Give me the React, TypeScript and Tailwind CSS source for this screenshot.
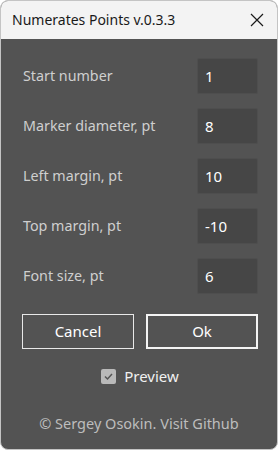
import React from "react";

const rows: [string, string][] = [
  ["Start number", "1"],
  ["Marker diameter, pt", "8"],
  ["Left margin, pt", "10"],
  ["Top margin, pt", "-10"],
  ["Font size, pt", "6"],
];

export default function App() {
  return (
    <div
      className="w-[278px] h-[450px] flex flex-col border border-[#c4c4c4] rounded-[8px] overflow-hidden bg-[#535353]"
      style={{ fontFamily: '"Noto Sans", "Open Sans", sans-serif' }}
    >
      <div className="h-[38px] shrink-0 bg-[#f3f3f3] flex items-center justify-between pl-[11px] pr-[13px]">
        <span className="text-[14px] text-[#1a1a1a] leading-none">Numerates Points v.0.3.3</span>
        <svg width="14" height="14" viewBox="0 0 14 14">
          <path d="M1 1 L13 13 M13 1 L1 13" stroke="#1a1a1a" strokeWidth="1.2" />
        </svg>
      </div>
      <div className="flex flex-col pt-[19px] pl-[21px] pr-[19px]">
        <div className="flex flex-col gap-[14px]">
          {rows.map(([label, value]) => (
            <div key={label} className="flex items-center justify-between h-[36px]">
              <span className="text-[14.3px] text-[#cfcfcf] pl-[1px]">{label}</span>
              <div className="w-[61px] h-[36px] bg-[#464646] border border-[#4e4e4e] rounded-[2px] flex items-center pl-[7px] text-[15px] text-white">
                {value}
              </div>
            </div>
          ))}
        </div>
        <div className="flex justify-between mt-[20px]">
          <button className="w-[112px] h-[35px] border border-[#e8e8e8] text-[15px] text-white flex items-center justify-center">
            Cancel
          </button>
          <button className="w-[112px] h-[35px] border-2 border-[#f4f4f4] text-[15px] text-white flex items-center justify-center">
            Ok
          </button>
        </div>
        <div className="flex items-center justify-center gap-[8px] mt-[20px] h-[15px]">
          <div className="w-[15px] h-[15px] bg-[#b9b9b9] rounded-[2px] flex items-center justify-center">
            <svg width="11" height="11" viewBox="0 0 11 11">
              <path d="M2 5.5 L4.5 8 L9 3" stroke="#555" strokeWidth="1.5" fill="none" />
            </svg>
          </div>
          <span className="text-[15px] text-[#f0f0f0]">Preview</span>
        </div>
        <div className="mt-[29px] text-center text-[14.5px] text-[#bdbdbd] pr-[2px]">
          © Sergey Osokin. Visit Github
        </div>
      </div>
    </div>
  );
}
